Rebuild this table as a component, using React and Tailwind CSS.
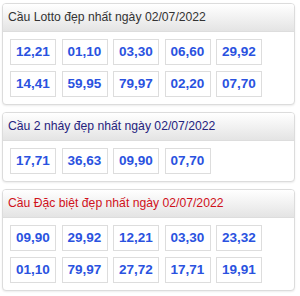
const CARDS = [
  {
    title: 'Cầu Lotto đẹp nhất ngày 02/07/2022',
    color: 'text-[#333333]',
    numbers: ['12,21', '01,10', '03,30', '06,60', '29,92', '14,41', '59,95', '79,97', '02,20', '07,70'],
  },
  {
    title: 'Cầu 2 nháy đẹp nhất ngày 02/07/2022',
    color: 'text-[#26237e]',
    numbers: ['17,71', '36,63', '09,90', '07,70'],
  },
  {
    title: 'Cầu Đặc biệt đẹp nhất ngày 02/07/2022',
    color: 'text-[#d0111b]',
    numbers: ['09,90', '29,92', '12,21', '03,30', '23,32', '01,10', '79,97', '27,72', '17,71', '19,91'],
  },
];

function Card({ title, color, numbers }) {
  return (
    <div className="rounded-[4px] border border-[#dcdcdc] bg-white shadow-[0_1px_2px_rgba(0,0,0,0.08)] overflow-hidden">
      <div className={`h-[28px] px-[5px] flex items-center border-b border-[#dddddd] bg-gradient-to-b from-white to-[#e4e4e4] text-[12.2px] ${color}`}>
        {title}
      </div>
      <div className="flex flex-wrap gap-x-[5.5px] gap-y-[6px] px-[7px] py-[7px]">
        {numbers.map((n, i) => (
          <div
            key={i}
            className="w-[46px] h-[26px] flex items-center justify-center border border-[#dddddd] text-[13.5px] font-bold text-[#2a52e0]"
          >
            {n}
          </div>
        ))}
      </div>
    </div>
  );
}

export default function App() {
  return (
    <div className="w-[300px] h-[296px] bg-white pt-[3px] pl-[2px] pr-[5px] flex flex-col gap-[7px] font-['Liberation_Sans',Arial,sans-serif]">
      {CARDS.map((c) => (
        <Card key={c.title} {...c} />
      ))}
    </div>
  );
}
